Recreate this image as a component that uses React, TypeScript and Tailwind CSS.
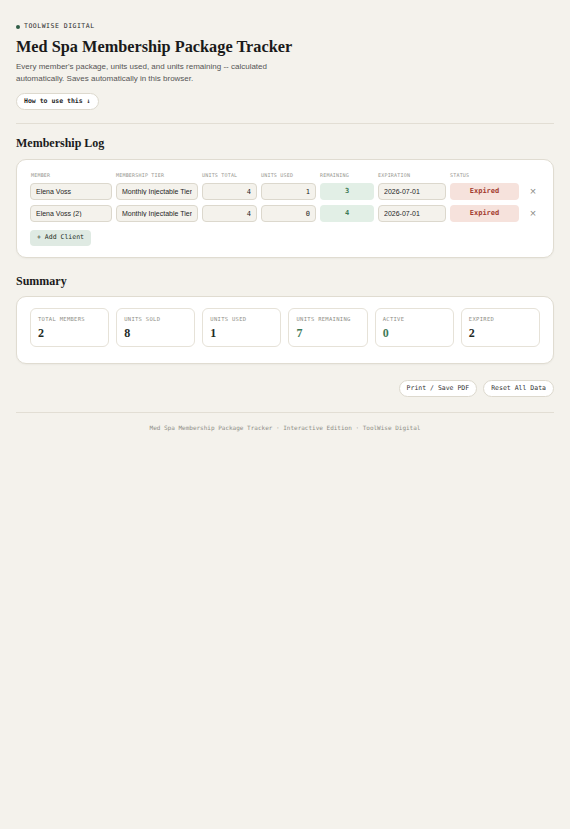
import React, { useState } from 'react';

type Client = {
  id: number;
  name: string;
  tier: string;
  total: number;
  used: number;
  expiration: string;
};

const mono = "font-['DejaVu_Sans_Mono','Liberation_Mono',monospace]";
const serif = "font-['Liberation_Serif','Times_New_Roman',serif]";

const initial: Client[] = [
  { id: 1, name: 'Elena Voss', tier: 'Monthly Injectable Tier', total: 4, used: 1, expiration: '2026-07-01' },
  { id: 2, name: 'Elena Voss (2)', tier: 'Monthly Injectable Tier', total: 4, used: 0, expiration: '2026-07-01' },
];

const cols = 'grid grid-cols-[82px_82px_55px_55px_54px_68px_69px_20px] gap-x-[4px] items-center';

function StatCard({ label, value, accent }: { label: string; value: number; accent?: boolean }) {
  return (
    <div className="h-[39px] rounded-[6px] border border-[#e6e2d8] bg-white px-[7px] pt-[7px]">
      <div className={`${mono} text-[5.5px] leading-[7px] tracking-[0.3px] text-[#8f8f88] uppercase`}>{label}</div>
      <div className={`${serif} mt-[3px] text-[12px] leading-[14px] font-bold ${accent ? 'text-[#3f7a59]' : 'text-[#1e2b26]'}`}>
        {value}
      </div>
    </div>
  );
}

export default function App() {
  const [clients, setClients] = useState<Client[]>(initial);

  const today = '2026-07-02';
  const sold = clients.reduce((s, c) => s + c.total, 0);
  const used = clients.reduce((s, c) => s + c.used, 0);
  const expired = clients.filter((c) => c.expiration < today).length;

  const update = (id: number, patch: Partial<Client>) =>
    setClients((list) => list.map((c) => (c.id === id ? { ...c, ...patch } : c)));

  const inputCls =
    'h-[17px] w-full rounded-[4px] border border-[#dcd8cd] bg-[#f4f2ec] px-[5px] text-[7px] text-[#1f1f1f] outline-none';

  return (
    <div className="min-h-screen bg-[#f4f2ec] px-[16px] pt-[22px] pb-10 font-['Liberation_Sans',Arial,sans-serif] text-[#1b1b1b]">
      <div className={`${mono} flex items-center gap-[4px] text-[6.5px] leading-[9px] tracking-[0.5px] text-[#2b2b2b]`}>
        <span className="h-[4px] w-[4px] rounded-full bg-[#2f5d46]" />
        TOOLWISE DIGITAL
      </div>

      <h1 className={`${serif} mt-[5px] text-[16.3px] leading-[22px] font-bold text-[#1a1a1a]`}>
        Med Spa Membership Package Tracker
      </h1>
      <p className="mt-[3px] max-w-[262px] text-[8px] leading-[12px] text-[#555]">
        Every member's package, units used, and units remaining -- calculated automatically. Saves automatically in
        this browser.
      </p>

      <button
        className={`${mono} mt-[8px] h-[17px] rounded-full border border-[#ddd9ce] bg-white px-[7px] text-[6.5px] font-bold text-[#1f1f1f]`}
      >
        How to use this ↓
      </button>

      <div className="mt-[13px] h-px bg-[#e2ded4]" />

      <h2 className={`${serif} mt-[11px] text-[12px] leading-[16px] font-bold`}>Membership Log</h2>

      <section className="mt-[8px] rounded-[10px] border border-[#e0dcd1] bg-white px-[13px] pt-[12px] pb-[11px] shadow-[0_1px_2px_rgba(0,0,0,0.04)]">
        <div className={`${cols} ${mono} text-[5px] leading-[7px] tracking-[0.2px] text-[#96968f] uppercase`}>
          <span className="pl-[1px]">Member</span>
          <span>Membership Tier</span>
          <span>Units Total</span>
          <span>Units Used</span>
          <span>Remaining</span>
          <span>Expiration</span>
          <span>Status</span>
          <span />
        </div>

        <div className="mt-[4px] flex flex-col gap-[5px]">
          {clients.map((c) => {
            const isExpired = c.expiration < today;
            return (
              <div key={c.id} className={cols}>
                <input className={inputCls} value={c.name} onChange={(e) => update(c.id, { name: e.target.value })} />
                <input className={inputCls} value={c.tier} onChange={(e) => update(c.id, { tier: e.target.value })} />
                <input
                  className={`${inputCls} ${mono} text-right`}
                  value={c.total}
                  onChange={(e) => update(c.id, { total: Number(e.target.value) || 0 })}
                />
                <input
                  className={`${inputCls} ${mono} text-right`}
                  value={c.used}
                  onChange={(e) => update(c.id, { used: Number(e.target.value) || 0 })}
                />
                <div
                  className={`${mono} flex h-[17px] items-center justify-center rounded-[4px] bg-[#e2efe6] text-[7px] font-bold text-[#3c7a56]`}
                >
                  {c.total - c.used}
                </div>
                <input
                  className={inputCls}
                  value={c.expiration}
                  onChange={(e) => update(c.id, { expiration: e.target.value })}
                />
                <div
                  className={`${mono} flex h-[17px] items-center justify-center rounded-[4px] text-[7px] font-bold ${
                    isExpired ? 'bg-[#f6e2dc] text-[#a33a2e]' : 'bg-[#e2efe6] text-[#3c7a56]'
                  }`}
                >
                  {isExpired ? 'Expired' : 'Active'}
                </div>
                <button
                  className="flex items-center justify-center text-[11px] leading-none text-[#8d8d88]"
                  onClick={() => setClients((list) => list.filter((x) => x.id !== c.id))}
                >
                  ×
                </button>
              </div>
            );
          })}
        </div>

        <button
          className={`${mono} mt-[6px] h-[16px] rounded-[4px] bg-[#dfeae3] px-[7px] text-[6.5px] text-[#1f2f27]`}
          onClick={() =>
            setClients((list) => [
              ...list,
              { id: Date.now(), name: '', tier: '', total: 0, used: 0, expiration: '' },
            ])
          }
        >
          + Add Client
        </button>
      </section>

      <h2 className={`${serif} mt-[15px] text-[12px] leading-[16px] font-bold`}>Summary</h2>

      <section className="mt-[7px] rounded-[10px] border border-[#e0dcd1] bg-white px-[13px] pt-[11px] pb-[16px] shadow-[0_1px_2px_rgba(0,0,0,0.04)]">
        <div className="grid grid-cols-6 gap-[7px]">
          <StatCard label="Total Members" value={clients.length} />
          <StatCard label="Units Sold" value={sold} />
          <StatCard label="Units Used" value={used} />
          <StatCard label="Units Remaining" value={sold - used} accent />
          <StatCard label="Active" value={clients.length - expired} accent />
          <StatCard label="Expired" value={expired} />
        </div>
      </section>

      <div className="mt-[16px] flex justify-end gap-[6px]">
        <button
          className={`${mono} h-[17px] rounded-full border border-[#ddd9ce] bg-white px-[7px] text-[6.5px] text-[#333]`}
          onClick={() => window.print()}
        >
          Print / Save PDF
        </button>
        <button
          className={`${mono} h-[17px] rounded-full border border-[#ddd9ce] bg-white px-[7px] text-[6.5px] text-[#333]`}
          onClick={() => setClients(initial)}
        >
          Reset All Data
        </button>
      </div>

      <div className="mt-[15px] h-px bg-[#e2ded4]" />

      <p className={`${mono} mt-[11px] text-center text-[6px] leading-[8px] text-[#8f8f88]`}>
        Med Spa Membership Package Tracker · Interactive Edition · ToolWise Digital
      </p>
    </div>
  );
}
